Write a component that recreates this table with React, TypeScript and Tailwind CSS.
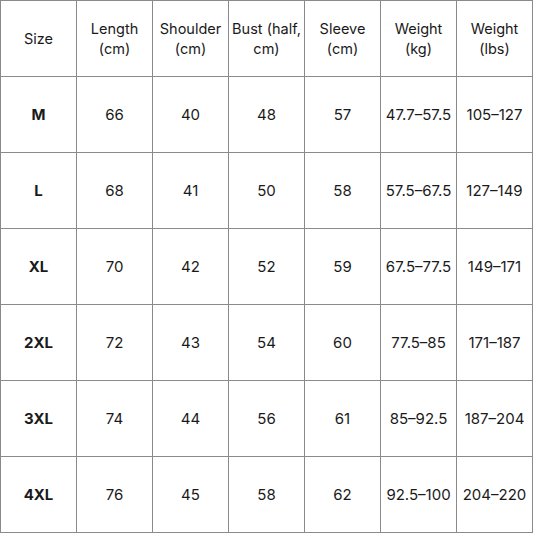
import React from "react";

const headers = [
  ["Size"],
  ["Length", "(cm)"],
  ["Shoulder", "(cm)"],
  ["Bust (half,", "cm)"],
  ["Sleeve", "(cm)"],
  ["Weight", "(kg)"],
  ["Weight", "(lbs)"],
];

const rows = [
  ["M", "66", "40", "48", "57", "47.7–57.5", "105–127"],
  ["L", "68", "41", "50", "58", "57.5–67.5", "127–149"],
  ["XL", "70", "42", "52", "59", "67.5–77.5", "149–171"],
  ["2XL", "72", "43", "54", "60", "77.5–85", "171–187"],
  ["3XL", "74", "44", "56", "61", "85–92.5", "187–204"],
  ["4XL", "76", "45", "58", "62", "92.5–100", "204–220"],
];

export default function App() {
  return (
    <div className="w-[533px] h-[533px] bg-white" style={{ fontFamily: "Inter, Lato, sans-serif" }}>
      <div className="grid grid-cols-[repeat(7,76px)] grid-rows-[repeat(7,76px)] border-r border-b border-[#8a8a8a] w-[533px] text-[#1a1a1a] text-[14.5px] leading-[20px]">
        {headers.map((h, i) => (
          <div key={"h" + i} className="border-l border-t border-[#8a8a8a] flex flex-col items-center justify-center text-center">
            {h.map((l, j) => (
              <span key={j}>{l}</span>
            ))}
          </div>
        ))}
        {rows.map((r, ri) =>
          r.map((c, ci) => (
            <div
              key={ri + "-" + ci}
              className={
                "border-l border-t border-[#8a8a8a] flex items-center justify-center text-center whitespace-nowrap pt-[1px] text-[15px] " +
                (ci === 0 ? "font-bold" : "")
              }
            >
              {c}
            </div>
          ))
        )}
      </div>
    </div>
  );
}
